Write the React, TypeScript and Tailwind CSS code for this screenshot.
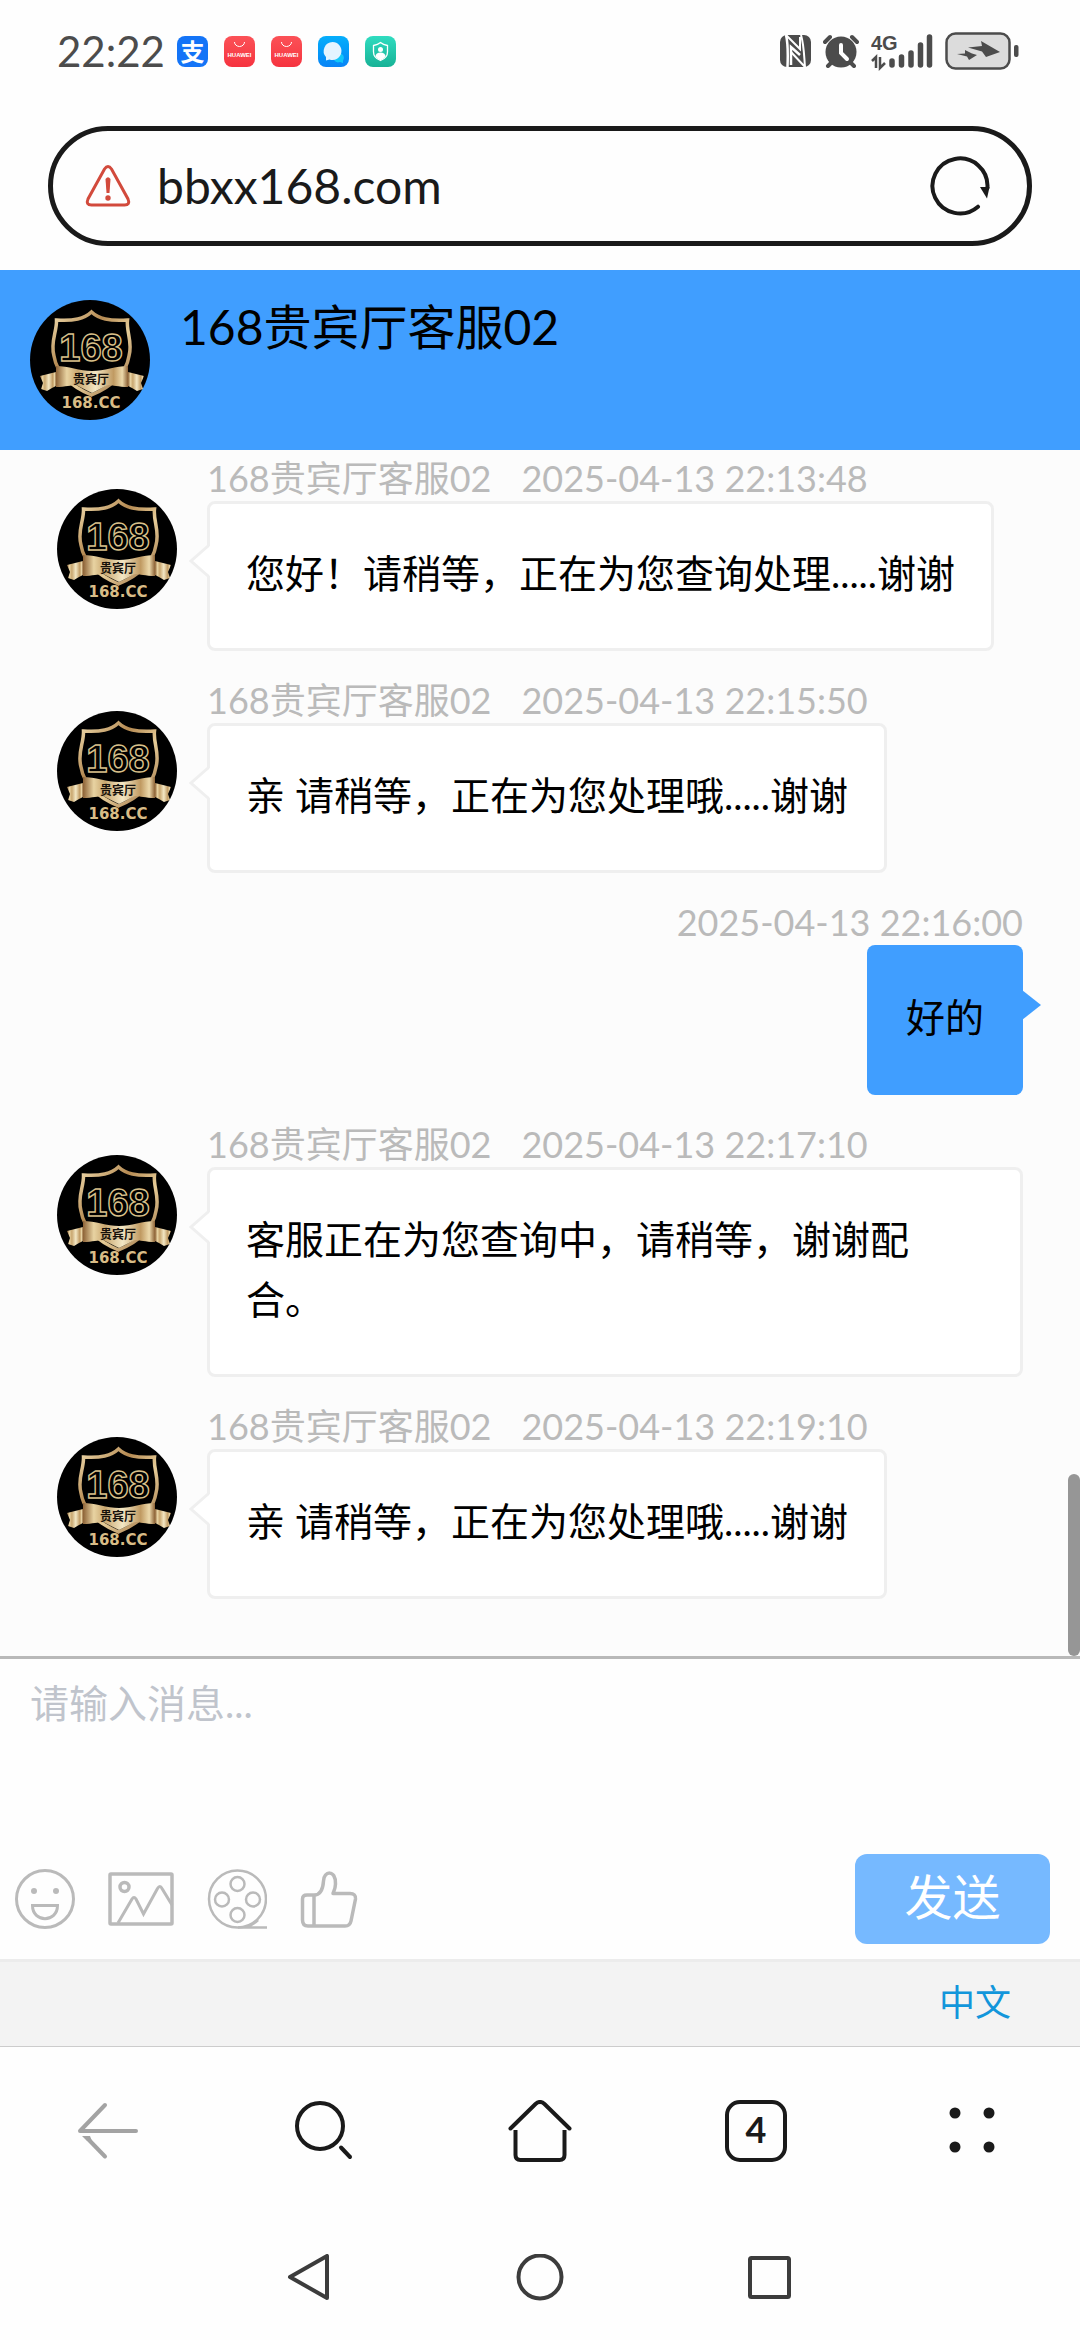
import { useState } from "react";
import type { FC, ReactNode } from "react";

interface Message {
  id: number;
  time: string;
  text: string;
  own?: boolean;
}

const AGENT = "168贵宾厅客服02";

const messages: Message[] = [
  { id: 1, time: "2025-04-13 22:13:48", text: "您好！请稍等，正在为您查询处理.....谢谢" },
  { id: 2, time: "2025-04-13 22:15:50", text: "亲 请稍等，正在为您处理哦.....谢谢" },
  { id: 3, time: "2025-04-13 22:16:00", text: "好的", own: true },
  { id: 4, time: "2025-04-13 22:17:10", text: "客服正在为您查询中，请稍等，谢谢配合。" },
  { id: 5, time: "2025-04-13 22:19:10", text: "亲 请稍等，正在为您处理哦.....谢谢" },
];

const Avatar: FC<{ id: string }> = ({ id }) => (
  <svg className="size-[120px] shrink-0" viewBox="0 0 120 120" role="img" aria-label={AGENT}>
    <defs>
      <linearGradient id={`gold-${id}`} x1="0" y1="0" x2="1" y2="1">
        <stop offset="0" stopColor="#f0dcae" />
        <stop offset="0.35" stopColor="#b58a52" />
        <stop offset="0.6" stopColor="#e6cc98" />
        <stop offset="1" stopColor="#94683a" />
      </linearGradient>
      <linearGradient id={`ribbon-${id}`} x1="0" y1="0" x2="1" y2="0">
        <stop offset="0" stopColor="#8d6236" />
        <stop offset="0.15" stopColor="#e8d3a2" />
        <stop offset="0.3" stopColor="#c9a770" />
        <stop offset="0.55" stopColor="#f3e7c4" />
        <stop offset="0.8" stopColor="#c09a62" />
        <stop offset="0.92" stopColor="#ecd9ab" />
        <stop offset="1" stopColor="#8d6236" />
      </linearGradient>
    </defs>
    <circle cx="60" cy="60" r="60" fill="#000" />
    <path
      d="M61.500 12C54 19 44 21 26.500 20C27 32 20 42 24 56C27 74 40 86 61.500 95C83 86 96 74 99 56C103 42 96 32 97.500 20C79 21 69 19 61.500 12Z"
      fill="none"
      stroke={`url(#gold-${id})`}
      strokeWidth="3.500"
    />
    <text
      x="61"
      y="61"
      textAnchor="middle"
      fill="#000"
      stroke="#d9c08a"
      strokeWidth="1.400"
      className="font-['Liberation_Sans',sans-serif] text-[38px] font-bold"
    >
      168
    </text>
    <path d="M10 76L26 72V86L22 88L17 91L11 89L13 83Z" fill={`url(#ribbon-${id})`} />
    <path d="M114 76L98 72V86L102 88L107 91L113 89L111 83Z" fill={`url(#ribbon-${id})`} />
    <path
      d="M26 66C38 66 50 71 62 71C74 71 86 66 98 66V87C88 87 83 85 78 85L62 93L46 85C41 85 36 87 26 87Z"
      fill={`url(#ribbon-${id})`}
    />
    <text
      x="61"
      y="84"
      textAnchor="middle"
      fill="#15100a"
      className="font-['Noto_Sans_CJK_SC',sans-serif] text-[12px] font-bold"
    >
      贵宾厅
    </text>
    <text
      x="61"
      y="108"
      textAnchor="middle"
      fill="#d8bc86"
      className="font-['DejaVu_Sans',sans-serif] text-[15px] font-bold"
    >
      168.CC
    </text>
  </svg>
);

const AppBadge: FC<{ className: string; children: ReactNode }> = ({ className, children }) => (
  <span className={`flex size-[31px] items-center justify-center rounded-lg ${className}`}>{children}</span>
);

const HuaweiBadge = () => (
  <AppBadge className="bg-linear-to-b from-[#fb5157] to-[#f6323f]">
    <svg className="size-[31px]" viewBox="0 0 31 31">
      <path d="M10.500 6a5 4.500 0 0 0 10 0" fill="none" stroke="#fff" strokeWidth="1" />
      <text
        x="15.500"
        y="21"
        textAnchor="middle"
        fill="#fff"
        className="font-['Liberation_Sans',sans-serif] text-[6px] font-bold"
      >
        HUAWEI
      </text>
    </svg>
  </AppBadge>
);

const StatusBar = () => (
  <div className="flex h-[102px] items-center justify-between pr-[61px] pl-[57px] text-[#4c4c4c]">
    <div className="flex items-center gap-3">
      <span className="text-[42px] leading-none">22:22</span>
      <div className="flex items-center gap-4">
        <AppBadge className="bg-[#1474f7]">
          <span className="font-['Noto_Sans_CJK_SC',sans-serif] text-[24px] leading-[36px] font-bold text-white">支</span>
        </AppBadge>
        <HuaweiBadge />
        <HuaweiBadge />
        <AppBadge className="bg-linear-to-b from-[#06aefb] to-[#0a84f6]">
          <svg className="size-[31px]" viewBox="0 0 31 31">
            <path d="M21 17a5 5 0 0 1 4 8v2l-3-1a5 5 0 0 1-6-2z" fill="#12c6f9" />
            <path d="M14.500 6a9 9 0 1 1-3 17.500l-3.500 1v-3.500A9 9 0 0 1 14.500 6Z" fill="#e4f4ff" />
          </svg>
        </AppBadge>
        <AppBadge className="bg-linear-to-b from-[#2fdcc0] to-[#17b296]">
          <svg className="size-[31px]" viewBox="0 0 31 31">
            <path
              d="M15.500 6.500C13 8.500 11 9 8.500 9.500V16c0 4 3 7 7 8.500c4-1.500 7-4.500 7-8.500V9.500C20 9 18 8.500 15.500 6.500Z"
              fill="none"
              stroke="#fff"
              strokeWidth="1.300"
            />
            <circle cx="15.500" cy="13.500" r="2.500" fill="#fff" />
            <path d="M10.500 20a5 3.500 0 0 1 10 0c-1 2-3 3.500-5 4.300c-2-.8-4-2.300-5-4.300Z" fill="#fff" />
          </svg>
        </AppBadge>
      </div>
    </div>
    <div className="flex items-center">
      <svg className="mr-3 h-8 w-[31px]" viewBox="0 0 31 32">
        <rect width="31" height="32" rx="7" fill="currentColor" />
        <path d="M6 0C8 8 8 20 7.500 32M11 30V12L20 20" fill="none" stroke="#fff" strokeWidth="2.500" />
        <path d="M6 0L20 14V2M11 17L25 32C24 20 24 10 21 0" fill="none" stroke="#fff" strokeWidth="2" />
      </svg>
      <svg className="mr-3 h-[34px] w-9" viewBox="0 0 36 34">
        <circle cx="18" cy="18" r="15.500" fill="currentColor" />
        <path d="M2 8L7 3M34 8L29 3M5 32L9 28M31 32L27 28" stroke="currentColor" strokeWidth="4" strokeLinecap="round" />
        <path d="M18 11V19L24 25" fill="none" stroke="#fff" strokeWidth="4" strokeLinecap="round" />
      </svg>
      <svg className="mr-3 h-10 w-[62px]" viewBox="0 0 62 40">
        <text
          x="0"
          y="19"
          fill="currentColor"
          className="font-['Liberation_Sans',sans-serif] text-[20px] font-bold"
        >
          4G
        </text>
        <path d="M1 30L5 26V37M9 26V37L14 32" fill="none" stroke="currentColor" strokeWidth="2.500" />
        <path
          d="M21 30V34M30.500 26V34M40 22V34M49.500 14V34M58.500 6V34"
          stroke="currentColor"
          strokeWidth="5.500"
          strokeLinecap="round"
        />
      </svg>
      <svg className="h-[38px] w-[74px]" viewBox="0 0 74 38">
        <rect x="1.500" y="1.500" width="63" height="35" rx="9" fill="#dcdcdc" stroke="currentColor" strokeWidth="2.500" />
        <rect x="69" y="13" width="4.500" height="12" rx="2" fill="currentColor" />
        <path d="M12 22L20 21.500L20 18L27 21.500L32 23L24 28L22 24.500Z" fill="currentColor" />
        <path d="M23 15.500L37 14L36 9L55 20L41 25L37 19.500Z" fill="currentColor" />
      </svg>
    </div>
  </div>
);

const AddressBar = () => (
  <div className="px-12 py-6">
    <div className="flex h-[120px] items-center rounded-full border-[5px] border-[#1a1a1a] pr-[37px] pl-[32px]">
      <svg className="h-[42px] w-[46px]" viewBox="0 0 46 42">
        <path
          d="M19.500 4Q23 -1 26.500 4L43 34Q45.500 40 39.500 40H6.500Q.5 40 3 34Z"
          fill="none"
          stroke="#d24a3c"
          strokeWidth="3"
        />
        <path d="M20.500 14Q23 10.500 25.500 14L24.500 28H21.500Z" fill="#d24a3c" />
        <circle cx="23" cy="33" r="2.700" fill="#d24a3c" />
      </svg>
      <input
        aria-label="网址"
        defaultValue="bbxx168.com"
        className="ml-[26px] min-w-0 flex-1 text-[48px] leading-[60px] text-[#1a1a1a] outline-none"
      />
      <button type="button" aria-label="刷新">
        <svg className="size-[60px]" viewBox="0 0 60 60">
          <path d="M48 50.700A27.500 27.500 0 1 1 57.400 32" fill="none" stroke="#1a1a1a" strokeWidth="4" strokeLinecap="round" />
          <path d="M50 31H59.500L57 42.500Z" fill="#1a1a1a" />
        </svg>
      </button>
    </div>
  </div>
);

const MessageRow: FC<{ message: Message }> = ({ message }) => {
  const { id, time, text, own = false } = message;

  if (own) {
    return (
      <li className="flex flex-col items-end">
        <div className="mb-1 text-[36px] leading-[38px] text-[#bababa]">{time}</div>
        <div className="relative rounded-lg bg-[#409eff] px-[39px] pt-[42px] pb-12 text-[39px] leading-[60px]">
          {text}
          <svg className="absolute top-[45px] -right-[18px] h-[30px] w-[19px]" viewBox="0 0 19 30">
            <path d="M0 0L19 15L0 30Z" fill="#409eff" />
          </svg>
        </div>
      </li>
    );
  }

  return (
    <li className="flex gap-[30px]">
      <div className="pt-[30px]">
        <Avatar id={`m${id}`} />
      </div>
      <div className="flex min-w-0 flex-col items-start">
        <div className="mb-1 flex gap-[30px] text-[36px] leading-[38px] whitespace-nowrap text-[#bababa]">
          <span>{AGENT}</span>
          <span>{time}</span>
        </div>
        <div className="relative rounded-lg border-[3px] border-[#efefef] bg-white px-9 pt-[39px] pb-[45px] text-[39px] leading-[60px]">
          {text}
          <svg className="absolute top-[40px] -left-[22px] h-[34px] w-[22px]" viewBox="0 0 22 34">
            <path d="M22 2L3 17L22 32Z" fill="#fff" />
            <path d="M20 2L3 17L20 32" fill="none" stroke="#efefef" strokeWidth="3" />
          </svg>
        </div>
      </div>
    </li>
  );
};

const ToolButton: FC<{ label: string; children: ReactNode }> = ({ label, children }) => (
  <button type="button" aria-label={label}>
    {children}
  </button>
);

const Composer = () => {
  const [draft, setDraft] = useState("");

  return (
    <div className="border-t-[3px] border-[#b9b9b9]">
      <textarea
        aria-label="消息"
        placeholder="请输入消息..."
        value={draft}
        onChange={(e) => setDraft(e.target.value)}
        className="block h-[195px] w-full resize-none px-[30px] pt-[15px] text-[39px] leading-[58px] outline-none placeholder:text-[#c0c4cc]"
      />
      <div className="flex items-center justify-between pr-[30px] pb-[15px] pl-[15px] text-[#bababa]">
        <div className="flex items-center gap-[33px]">
          <ToolButton label="表情">
            <svg className="size-[60px]" viewBox="0 0 60 60" fill="none" stroke="currentColor" strokeWidth="3">
              <circle cx="30" cy="30" r="28.500" />
              <path d="M17.500 36.500H42.500C42.500 54 17.500 54 17.500 36.500Z" />
              <circle cx="19" cy="22" r="3" fill="currentColor" stroke="none" />
              <circle cx="41" cy="22" r="3" fill="currentColor" stroke="none" />
            </svg>
          </ToolButton>
          <ToolButton label="图片">
            <svg className="h-[60px] w-[66px]" viewBox="0 0 66 60" fill="none" stroke="currentColor" strokeWidth="3">
              <rect x="2" y="5" width="62" height="50" rx="1" strokeWidth="3.500" />
              <circle cx="16.500" cy="18" r="4.500" strokeWidth="3.500" />
              <path d="M10 54L24 30Q26 27 28 30L35.500 45L49.500 19.500Q52 15.500 54 19.500L64 36" />
            </svg>
          </ToolButton>
          <ToolButton label="视频">
            <svg className="size-[60px]" viewBox="-1 0 60 60" fill="none" stroke="currentColor" strokeWidth="2.500">
              <circle cx="29.500" cy="30" r="28.500" />
              <path d="M30 58.500H59M38 58Q45 56 50 51" />
              <circle cx="29.500" cy="15" r="7" />
              <circle cx="29.500" cy="46" r="7" />
              <circle cx="14" cy="30.500" r="7" />
              <circle cx="45" cy="30.500" r="7" />
            </svg>
          </ToolButton>
          <ToolButton label="点赞">
            <svg className="h-[60px] w-[58px]" viewBox="0 0 58 60" fill="none" stroke="currentColor" strokeWidth="3.500">
              <path
                d="M14 26C21 26 23 20 23.500 12C23.500 2 36 0 35.500 15C35.500 19 34 22 33 24.500H50Q56 24.500 55.500 30L51 52Q50 57 45 57H8Q2.500 57 2.500 51V30Q2.500 26 7 26Z"
                strokeLinejoin="round"
              />
              <path d="M14 26V57" />
            </svg>
          </ToolButton>
        </div>
        <button
          type="button"
          className="h-[90px] w-[195px] rounded-xl bg-[#76b9ff] pb-1 text-[48px] leading-none text-white"
        >
          发送
        </button>
      </div>
    </div>
  );
};

const BrowserNav = () => (
  <nav className="grid h-[168px] grid-cols-5 text-[#1a1a1a]">
    <button type="button" aria-label="后退" className="flex items-center justify-center text-[#a3a3a3]">
      <svg className="size-[60px]" viewBox="0 0 60 60" fill="none" stroke="currentColor" strokeWidth="4" strokeLinecap="round">
        <path d="M58 30H2L27 4" strokeLinejoin="round" />
        <path d="M4 35H12L14 40H9Z" fill="currentColor" stroke="none" />
        <path d="M10.500 38.500L27 55.500" />
      </svg>
    </button>
    <button type="button" aria-label="搜索" className="flex items-center justify-center">
      <svg className="size-[60px]" viewBox="0 0 60 60" fill="none" stroke="currentColor" strokeWidth="4" strokeLinecap="round">
        <circle cx="26" cy="25" r="23" />
        <path d="M47 46.500L56 56" />
      </svg>
    </button>
    <button type="button" aria-label="主页" className="flex items-center justify-center">
      <svg className="h-[62px] w-[64px]" viewBox="0 0 64 62" fill="none" stroke="currentColor" strokeWidth="4">
        <path d="M2.500 28.500L27.500 4Q32 0 36.500 4L61.500 28.500" strokeLinecap="round" />
        <path d="M7.500 30V55Q7.500 60 12.500 60H51.500Q56.500 60 56.500 55V30" />
      </svg>
    </button>
    <button type="button" aria-label="标签页" className="flex items-center justify-center">
      <span className="flex size-[62px] items-center justify-center rounded-[15px] border-4 border-current pb-1 text-[36px] leading-none font-bold">
        4
      </span>
    </button>
    <button type="button" aria-label="菜单" className="flex items-center justify-center">
      <svg className="size-[48px]" viewBox="0 0 48 48" fill="currentColor">
        <circle cx="7" cy="6" r="5.500" />
        <circle cx="41" cy="6" r="5.500" />
        <circle cx="7" cy="40" r="5.500" />
        <circle cx="41" cy="40" r="5.500" />
      </svg>
    </button>
  </nav>
);

const SystemNav = () => (
  <nav className="grid h-[125px] grid-cols-3 px-[194px] text-[#3c3c3c]">
    <button type="button" aria-label="返回" className="flex items-center justify-center">
      <svg className="size-12" viewBox="0 0 48 48" fill="none" stroke="currentColor" strokeWidth="4" strokeLinejoin="round">
        <path d="M42 2V44L5 23Z" />
      </svg>
    </button>
    <button type="button" aria-label="桌面" className="flex items-center justify-center">
      <svg className="size-12" viewBox="0 0 48 48" fill="none" stroke="currentColor" strokeWidth="4">
        <circle cx="24" cy="23" r="21.500" />
      </svg>
    </button>
    <button type="button" aria-label="最近任务" className="flex items-center justify-center">
      <svg className="size-12" viewBox="0 0 48 48" fill="none" stroke="currentColor" strokeWidth="4">
        <rect x="3" y="4" width="39" height="39" rx="1.500" />
      </svg>
    </button>
  </nav>
);

const App = () => (
  <div className="min-h-screen bg-[#fefefe] font-['Lato','Noto_Sans_CJK_SC',sans-serif] text-black">
    <StatusBar />
    <AddressBar />
    <header className="flex h-[180px] items-start gap-[30px] bg-[#409eff] p-[30px]">
      <Avatar id="header" />
      <h1 className="text-[48px] leading-[54px]">{AGENT}</h1>
    </header>
    <main className="relative bg-[#fcfcfc]">
      <ul className="flex flex-col gap-[30px] pt-[9px] pr-[57px] pb-[57px] pl-[57px]">
        {messages.map((message) => (
          <MessageRow key={message.id} message={message} />
        ))}
      </ul>
      {/* scroll thumb */}
      <div className="absolute right-0 bottom-0 h-[182px] w-3 rounded-full bg-[#969696]" />
    </main>
    <Composer />
    <footer className="flex h-[88px] items-center justify-end border-t-[3px] border-b border-t-[#ececec] border-b-[#cccccc] bg-[#f3f3f3] pr-[69px]">
      <button type="button" className="pb-1 text-[36px] leading-none text-[#1296db]">
        中文
      </button>
    </footer>
    <BrowserNav />
    <SystemNav />
  </div>
);

export default App;
